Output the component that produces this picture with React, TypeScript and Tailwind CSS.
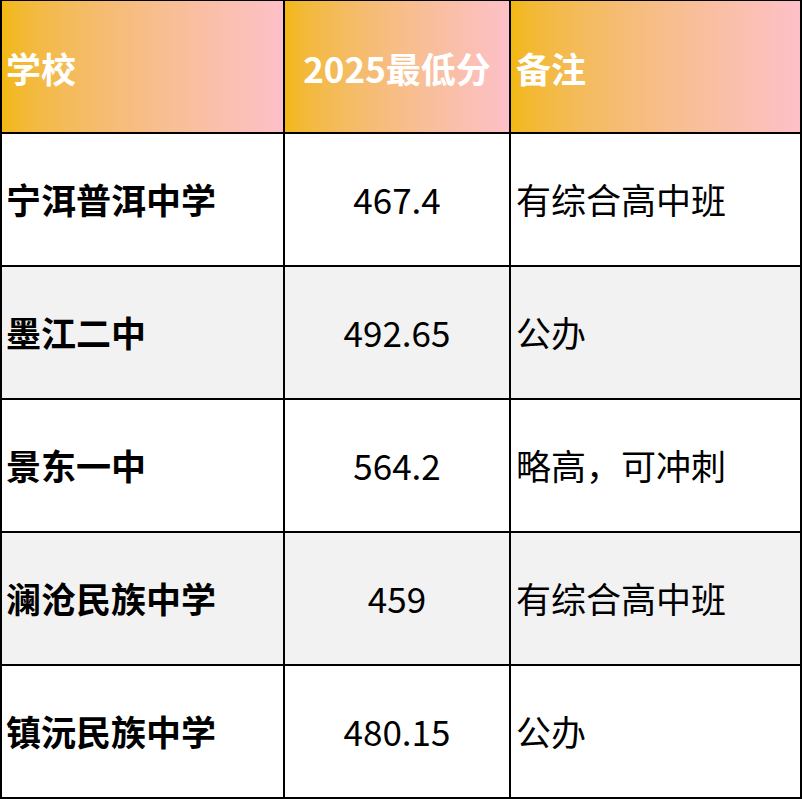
import React from "react";

const rows = [
  { school: "宁洱普洱中学", score: "467.4", note: "有综合高中班" },
  { school: "墨江二中", score: "492.65", note: "公办" },
  { school: "景东一中", score: "564.2", note: "略高，可冲刺" },
  { school: "澜沧民族中学", score: "459", note: "有综合高中班" },
  { school: "镇沅民族中学", score: "480.15", note: "公办" },
];

const font = { fontFamily: '"Microsoft YaHei", "Noto Sans CJK SC", "Noto Sans", sans-serif' };

export default function App() {
  return (
    <div className="w-[802px] h-[799px] bg-white" style={font}>
      <div className="grid grid-cols-[281px_224px_289px] auto-rows-[131px] gap-[2px] bg-black pt-[1px] px-[2px] pb-[2px] text-[35px]">
        {/* Header */}
        <div className="bg-linear-to-r from-[#f2b80f] to-[#fdc0c8] flex items-center pl-[4px] pt-[4px] font-bold text-white">
          学校
        </div>
        <div className="bg-linear-to-r from-[#f2b80f] to-[#fdc0c8] flex items-center justify-center pt-[4px] font-bold text-white">
          2025最低分
        </div>
        <div className="bg-linear-to-r from-[#f2b80f] to-[#fdc0c8] flex items-center pl-[5px] pt-[4px] font-bold text-white">
          备注
        </div>

        {rows.map((r, i) => {
          const bg = i % 2 === 1 ? "bg-[#f2f2f2]" : "bg-white";
          return (
            <React.Fragment key={r.school}>
              <div className={`${bg} flex items-center pl-[4px] font-bold text-black`}>
                {r.school}
              </div>
              <div className={`${bg} flex items-center justify-center text-black`}>
                {r.score}
              </div>
              <div className={`${bg} flex items-center pl-[5px] text-black`}>
                {r.note}
              </div>
            </React.Fragment>
          );
        })}
      </div>
    </div>
  );
}
